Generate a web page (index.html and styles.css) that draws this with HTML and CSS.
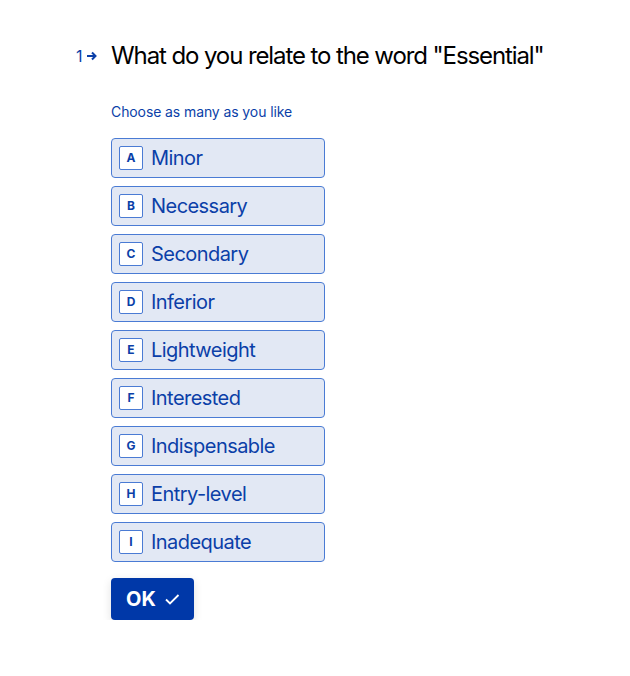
FILE: index.html
```html
<!DOCTYPE html>
<html lang="en">
<head>
  <meta charset="UTF-8">
  <title>Question 1</title>
  <link rel="stylesheet" href="styles.css">
</head>
<body>

  <div class="question">
    <div class="counter">
      <span>1</span>
      <svg width="12" height="12" viewBox="0 0 12 12"><path d="M1 6h8M6 2.5 9.5 6 6 9.5" fill="none" stroke="#0b3fa8" stroke-width="2"/></svg>
    </div>

    <div class="body">
      <h1>What do you relate to the word "Essential"</h1>
      <p class="hint">Choose as many as you like</p>

      <div class="choices">
        <div class="choice"><span class="key">A</span>Minor</div>
        <div class="choice"><span class="key">B</span>Necessary</div>
        <div class="choice"><span class="key">C</span>Secondary</div>
        <div class="choice"><span class="key">D</span>Inferior</div>
        <div class="choice"><span class="key">E</span>Lightweight</div>
        <div class="choice"><span class="key">F</span>Interested</div>
        <div class="choice"><span class="key">G</span>Indispensable</div>
        <div class="choice"><span class="key">H</span>Entry-level</div>
        <div class="choice"><span class="key">I</span>Inadequate</div>
      </div>

      <button class="ok">OK
        <svg width="16" height="16" viewBox="0 0 16 16"><path d="M2 8.5l4 4L14.5 4" fill="none" stroke="#fff" stroke-width="1.8"/></svg>
      </button>
    </div>
  </div>

</body>
</html>
```

FILE: styles.css
```css
body {
  margin: 0;
  font-family: Inter, "Noto Sans", sans-serif;
  background-color: #fff;
}
.question {
  display: flex;
  padding: 40px 0 0 76px;
}
.counter {
  width: 35px;
  display: flex;
  align-items: center;
  gap: 3px;
  height: 32px;
  color: #0b3fa8;
  font-size: 16px;
}
.counter span {
  margin-top: -1px;
}
.body {
  display: flex;
  flex-direction: column;
  align-items: flex-start;
}
h1 {
  margin: 0;
  font-size: 24px;
  line-height: 32px;
  font-weight: 400;
  letter-spacing: -1.1px;
  color: #000;
}
.hint {
  margin: 30px 0 16px;
  font-size: 14px;
  line-height: 20px;
  letter-spacing: -0.1px;
  color: #0b3fa8;
}
.choices {
  display: flex;
  flex-direction: column;
  gap: 8px;
}
.choice {
  box-sizing: border-box;
  width: 214px;
  height: 40px;
  padding: 0 7px;
  display: flex;
  align-items: center;
  gap: 8px;
  background-color: #e2e8f4;
  border: 1px solid #4a7bd4;
  border-radius: 4px;
  color: #0b3fa8;
  font-size: 20px;
  letter-spacing: -0.55px;
}
.key {
  box-sizing: border-box;
  width: 24px;
  height: 24px;
  padding-bottom: 2px;
  display: flex;
  align-items: center;
  justify-content: center;
  background-color: #fff;
  border: 1px solid #4a7bd4;
  border-radius: 2px;
  font-size: 12px;
  font-weight: 700;
  letter-spacing: 0;
}
.ok {
  margin-top: 16px;
  height: 42px;
  padding: 0 14px 0 15px;
  display: flex;
  align-items: center;
  gap: 8px;
  background-color: #0038a8;
  color: #fff;
  border: none;
  border-radius: 4px;
  font-family: Inter, "Noto Sans", sans-serif;
  font-size: 20px;
  font-weight: 700;
  box-shadow: 0 3px 10px rgba(0, 0, 0, 0.12);
}
```
